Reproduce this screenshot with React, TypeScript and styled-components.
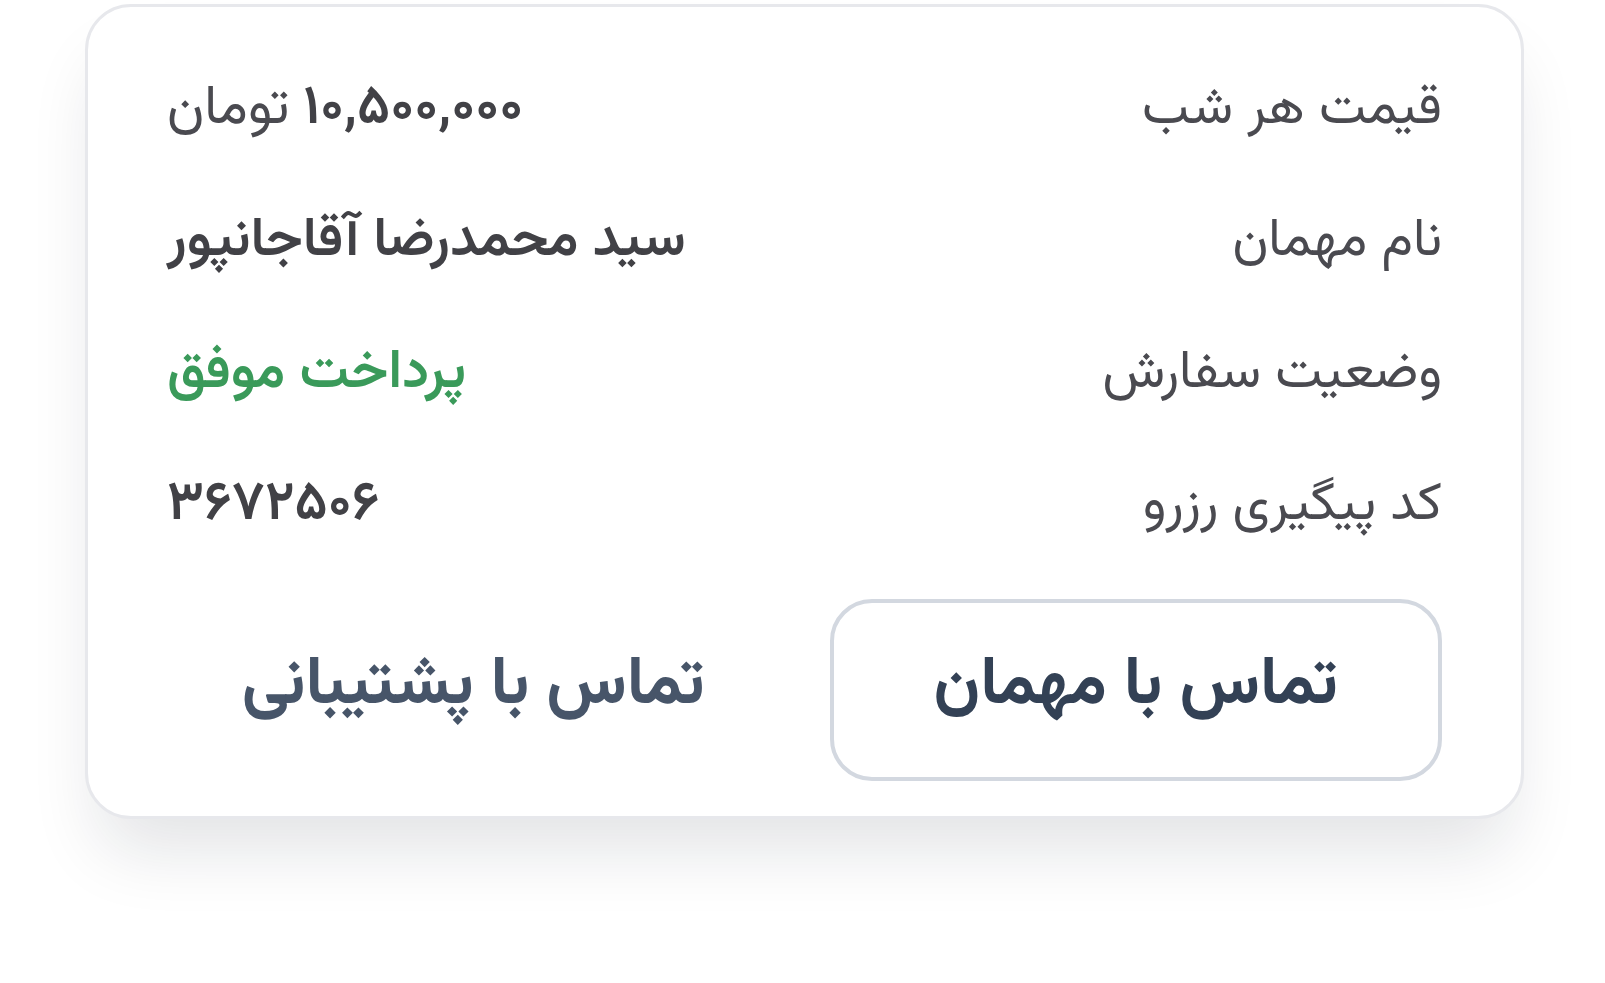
import styled, { createGlobalStyle } from "styled-components";

const GlobalStyle = createGlobalStyle`
  html, body {
    margin: 0;
    padding: 0;
    background: #ffffff;
  }
  body {
    font-family: "Vazirmatn", "Noto Sans Arabic", "DejaVu Sans", sans-serif;
  }
`;

const Page = styled.div`
  min-height: 100vh;
  padding: 4px 0 0 85px;
  box-sizing: border-box;
`;

const Card = styled.section`
  direction: rtl;
  width: 1439px;
  box-sizing: border-box;
  padding: 37px 79px 35px 79px;
  background: #ffffff;
  border: 3px solid #e7e8ec;
  border-radius: 46px;
  box-shadow: 0 45px 70px -15px rgba(17, 24, 39, 0.12);
`;

const Row = styled.div`
  height: 132px;
  display: flex;
  align-items: center;
  justify-content: space-between;
`;

const Label = styled.span`
  font-size: 53px;
  color: #4a4a50;
`;

const Value = styled.span<{ $tone?: "success" }>`
  font-size: 55px;
  font-weight: 600;
  color: ${(p) => (p.$tone === "success" ? "#3a9a5a" : "#414146")};
`;

const Unit = styled.span`
  font-weight: 400;
  color: #4a4a50;
`;

const Actions = styled.div`
  display: grid;
  grid-template-columns: 1fr 1fr;
  gap: 50px;
  margin-top: 27px;
`;

const Button = styled.button<{ $outlined?: boolean }>`
  height: 182px;
  padding: 0 0 8px;
  font-family: inherit;
  font-size: 67px;
  font-weight: 700;
  border-radius: 42px;
  cursor: pointer;
  background: #ffffff;
  border: 4px solid ${(p) => (p.$outlined ? "#d3d8e0" : "transparent")};
  color: ${(p) => (p.$outlined ? "#334155" : "#475569")};
`;

const rows = [
  { label: "قیمت هر شب", price: "۱۰,۵۰۰,۰۰۰" },
  { label: "نام مهمان", value: "سید محمدرضا آقاجانپور" },
  { label: "وضعیت سفارش", value: "پرداخت موفق", success: true },
  { label: "کد پیگیری رزرو", value: "۳۶۷۲۵۰۶" },
];

export default function App() {
  return (
    <>
      <GlobalStyle />
      <Page>
        <Card>
          {rows.map((r) => (
            <Row key={r.label}>
              <Label>{r.label}</Label>
              {r.price ? (
                <Value>
                  {r.price} <Unit>تومان</Unit>
                </Value>
              ) : (
                <Value $tone={r.success ? "success" : undefined}>{r.value}</Value>
              )}
            </Row>
          ))}
          <Actions>
            <Button $outlined>تماس با مهمان</Button>
            <Button>تماس با پشتیبانی</Button>
          </Actions>
        </Card>
      </Page>
    </>
  );
}
